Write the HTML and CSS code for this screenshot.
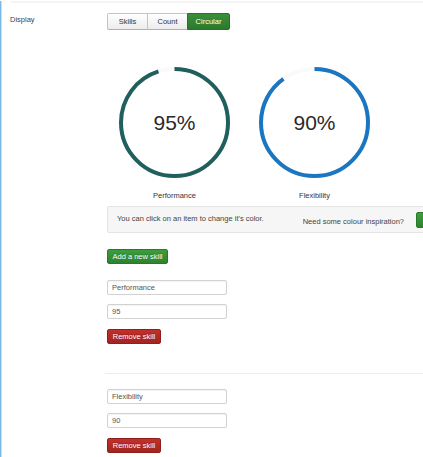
FILE: index.html
```html
<!DOCTYPE html>
<html>
<head>
<meta charset="utf-8">
<link rel="stylesheet" href="styles.css">
</head>
<body>
<div class="page">
  <div class="topline"></div>
  <div class="row">
    <div class="label">Display</div>
    <div class="controls">
      <div class="btn-group">
        <button class="gbtn">Skills</button>
        <button class="gbtn">Count</button>
        <button class="gbtn active">Circular</button>
      </div>
      <div class="charts">
        <div class="chart">
          <svg class="ring" width="111" height="111" viewBox="0 0 111 111">
            <circle class="track" cx="55.5" cy="55.5" r="53.5"></circle>
            <circle class="arc teal" cx="55.5" cy="55.5" r="53.5" stroke-dasharray="319.3 336.2" transform="rotate(-90 55.5 55.5)"></circle>
            <text class="pct" x="55.5" y="63">95%</text>
          </svg>
          <div class="chart-label">Performance</div>
        </div>
        <div class="chart">
          <svg class="ring" width="111" height="111" viewBox="0 0 111 111">
            <circle class="track" cx="55.5" cy="55.5" r="53.5"></circle>
            <circle class="arc blue" cx="55.5" cy="55.5" r="53.5" stroke-dasharray="302.5 336.2" transform="rotate(-90 55.5 55.5)"></circle>
            <text class="pct" x="55.5" y="63">90%</text>
          </svg>
          <div class="chart-label">Flexibility</div>
        </div>
      </div>
      <div class="well">
        <span class="well-text">You can click on an item to change it's color.</span>
        <span class="well-right">
          <span class="well-q">Need some colour inspiration?</span>
          <button class="btn btn-success btn-small" aria-label="Get colours"></button>
        </span>
      </div>
      <button class="btn btn-success add">Add a new skill</button>
      <div class="skill">
        <input class="field" type="text" value="Performance">
        <input class="field" type="text" value="95">
        <button class="btn btn-danger">Remove skill</button>
      </div>
      <div class="divider"></div>
      <div class="skill second">
        <input class="field" type="text" value="Flexibility">
        <input class="field" type="text" value="90">
        <button class="btn btn-danger">Remove skill</button>
      </div>
    </div>
  </div>
</div>
</body>
</html>
```
FILE: styles.css
```css
html, body {
  margin: 0;
  padding: 0;
  overflow: hidden;
  background: #fff;
}
body {
  font-family: "Liberation Sans", Arial, sans-serif;
  color: #333;
}
.page {
  border-left: 1px solid #7ab8e8;
  box-shadow: inset 1px 0 0 #c6e0f5;
  height: 457px;
  box-sizing: border-box;
}
.topline {
  margin-left: 10px;
  margin-top: 1px;
  height: 2px;
  background: #f5f5f5;
}
.row {
  display: flex;
  padding-left: 9px;
}
.label {
  width: 97px;
  flex: none;
  font-size: 7.5px;
  line-height: 10px;
  margin-top: 12px;
  color: #444;
}
.controls {
  flex: none;
  width: 360px;
  display: flex;
  flex-direction: column;
  align-items: flex-start;
}
.btn-group {
  display: flex;
  margin-top: 10px;
}
.gbtn {
  font-family: "Liberation Sans", Arial, sans-serif;
  font-size: 7.5px;
  height: 17px;
  padding: 0;
  margin: 0;
  border: 1px solid #c4c4c4;
  border-bottom-color: #b0b0b0;
  background: linear-gradient(#ffffff, #ececec);
  color: #333;
  width: 41px;
  margin-left: -1px;
}
.gbtn:first-child {
  margin-left: 0;
  border-radius: 2px 0 0 2px;
}
.gbtn.active {
  width: 43px;
  background: linear-gradient(#3b8f3b, #2b7a2b);
  border-color: #2a6f2a;
  color: #fff;
  border-radius: 0 2px 2px 0;
}
.charts {
  display: flex;
  gap: 29px;
  padding-left: 12px;
  margin-top: 37px;
}
.chart {
  width: 111px;
  display: flex;
  flex-direction: column;
  align-items: center;
}
.ring {
  display: block;
}
.track {
  fill: none;
  stroke: #fafafa;
  stroke-width: 4;
}
.arc {
  fill: none;
  stroke-width: 4;
}
.teal { stroke: #1f5f5d; }
.blue { stroke: #1a76c0; }
.pct {
  font-family: "Liberation Sans", Arial, sans-serif;
  font-size: 21px;
  fill: #2a2a2a;
  text-anchor: middle;
}
.chart-label {
  margin-top: 13px;
  font-size: 7.5px;
  line-height: 10px;
  color: #333;
  white-space: nowrap;
}
.well {
  margin-top: 5px;
  width: 340px;
  height: 27px;
  box-sizing: border-box;
  background: #f6f6f6;
  border: 1px solid #e4e4e4;
  border-radius: 2px;
  display: flex;
  justify-content: space-between;
  padding: 7px 0 0 9px;
  font-size: 7.5px;
  line-height: 10px;
  color: #444;
}
.well-right {
  display: flex;
  align-items: center;
  gap: 12px;
  margin-top: -2px;
  height: 16px;
}
.well-q {
  padding-top: 4px;
  color: #444;
}
.btn {
  font-family: "Liberation Sans", Arial, sans-serif;
  font-size: 7.5px;
  color: #fff;
  border-radius: 2px;
  padding: 0 6px;
  height: 15px;
  line-height: 13px;
  text-shadow: 0 -1px 0 rgba(0,0,0,0.25);
  cursor: pointer;
}
.btn-success {
  background: linear-gradient(#3d9e3d, #2d832d);
  border: 1px solid #2a762a;
}
.btn-small {
  height: 16px;
  width: 30px;
}
.btn-danger {
  background: linear-gradient(#c2302b, #a22420);
  border: 1px solid #8e1f1c;
  width: 54px;
  padding: 0;
}
.add {
  margin-top: 16px;
  width: 61px;
  padding: 0;
}
.skill {
  display: flex;
  flex-direction: column;
  align-items: flex-start;
  margin-top: 16px;
}
.skill.second {
  margin-top: 15px;
}
.field {
  width: 120px;
  height: 15px;
  box-sizing: border-box;
  border: 1px solid #d2d2d2;
  border-radius: 2px;
  padding: 0 4px;
  margin: 0 0 9px 0;
  font-family: "Liberation Sans", Arial, sans-serif;
  font-size: 7.5px;
  color: #555;
  background: #fff;
  box-shadow: inset 0 1px 1px rgba(0,0,0,0.05);
}
.skill .field + .field {
  margin-bottom: 10px;
}
.divider {
  margin-top: 29px;
  width: 320px;
  margin-left: -2px;
  height: 1px;
  background: #ececec;
}
```
